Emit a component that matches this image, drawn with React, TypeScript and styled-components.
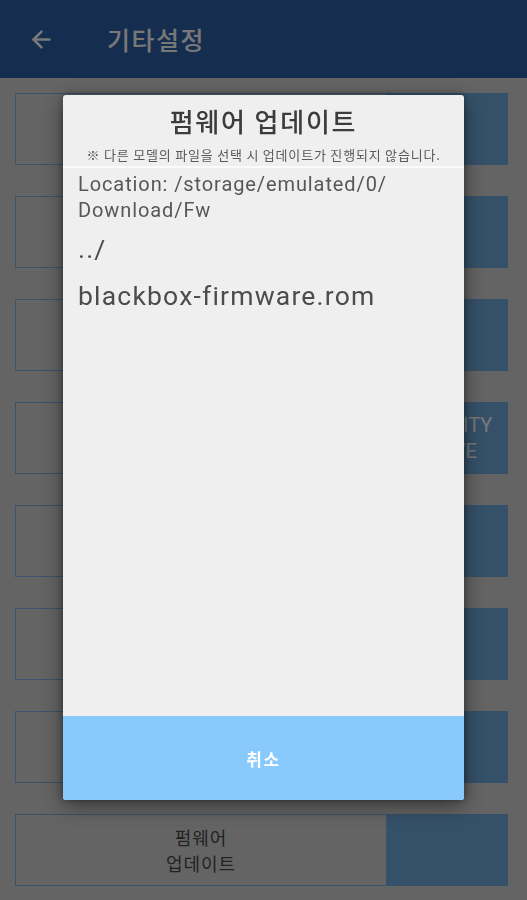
import React from "react";
import styled, { createGlobalStyle } from "styled-components";
import { ArrowLeft } from "lucide-react";

const GlobalStyle = createGlobalStyle`
  html, body { margin: 0; padding: 0; }
  body {
    width: 527px;
    height: 900px;
    overflow: hidden;
    background: #c9c9c9;
    font-family: Roboto, "Noto Sans CJK KR", "Noto Sans", sans-serif;
  }
`;

const Page = styled.div`
  width: 527px;
  height: 900px;
  background: #c9c9c9;
  display: flex;
  flex-direction: column;
`;

const AppBar = styled.header`
  height: 78px;
  flex: 0 0 78px;
  background: #2a5a9f;
  display: flex;
  align-items: center;
  padding-left: 28px;
  gap: 52px;
  color: #f4f4f4;
  box-sizing: border-box;
`;

const AppBarTitle = styled.h1`
  margin: 0;
  font-family: "Noto Sans CJK KR", Roboto, sans-serif;
  font-size: 25px;
  font-weight: 500;
  color: #f0f0f0;
  letter-spacing: 1.5px;
`;

const List = styled.div`
  display: flex;
  flex-direction: column;
  gap: 31px;
  padding: 15px 19px 0 15px;
`;

const Row = styled.div`
  height: 72px;
  display: flex;
`;

const LabelBox = styled.div`
  flex: 0 0 372px;
  box-sizing: border-box;
  border: 1.5px solid #76a6d6;
  display: flex;
  align-items: center;
  justify-content: center;
  text-align: center;
  font-family: "Noto Sans CJK KR", Roboto, sans-serif;
  font-size: 18px;
  line-height: 26px;
  letter-spacing: 1px;
  color: #444;
`;

const ValueBox = styled.div`
  flex: 1;
  background: #6aa3d2;
  display: flex;
  align-items: center;
  justify-content: center;
  text-align: center;
  font-size: 20px;
  line-height: 26px;
  color: #f2f2f2;
  padding-left: 4px;
`;

const Overlay = styled.div`
  position: fixed;
  inset: 0;
  background: rgba(0, 0, 0, 0.5);
  display: flex;
  justify-content: center;
  align-items: flex-start;
  padding-top: 95px;
`;

const Dialog = styled.div`
  width: 401px;
  height: 705px;
  background: #efefef;
  border-radius: 3px;
  overflow: hidden;
  display: flex;
  flex-direction: column;
  box-shadow: 0 6px 22px rgba(0, 0, 0, 0.45), 0 0 7px rgba(0, 0, 0, 0.35);
`;

const DialogHeader = styled.div`
  display: flex;
  flex-direction: column;
  align-items: center;
  padding: 11px 0 3px;
  border-bottom: 2px solid #fbfbfb;
  font-family: "Noto Sans CJK KR", Roboto, sans-serif;
`;

const DialogTitle = styled.h2`
  margin: 0;
  font-size: 26px;
  line-height: 30px;
  font-weight: 500;
  letter-spacing: 1.8px;
  color: #3c3c3c;
`;

const DialogNote = styled.p`
  margin: 11px 0 0;
  font-size: 13px;
  line-height: 16px;
  letter-spacing: 0.8px;
  color: #5a5a5a;
  white-space: nowrap;
`;

const DialogBody = styled.div`
  flex: 1;
  padding: 3px 15px 0;
  color: #555;
`;

const Location = styled.div`
  font-size: 20px;
  line-height: 26px;
  letter-spacing: 0.9px;
  color: #575757;
  margin-bottom: 2px;
`;

const FileItem = styled.div`
  height: 47px;
  display: flex;
  align-items: center;
  font-size: 26.5px;
  letter-spacing: 1.2px;
  color: #4c4c4c;
`;

const CancelButton = styled.button`
  flex: 0 0 84px;
  border: none;
  background: #89cafd;
  color: #ffffff;
  font-family: "Noto Sans CJK KR", Roboto, sans-serif;
  font-size: 17px;
  font-weight: 700;
  letter-spacing: 1.5px;
  cursor: pointer;
`;

const rows: { label?: string; value?: string }[] = [
  {},
  {},
  {},
  { value: "PRIORITY\nDRIVE" },
  {},
  {},
  {},
  { label: "펌웨어\n업데이트" },
];

const Multiline: React.FC<{ text: string }> = ({ text }) => (
  <span>
    {text.split("\n").map((t, i) => (
      <React.Fragment key={i}>
        {i > 0 && <br />}
        {t}
      </React.Fragment>
    ))}
  </span>
);

export default function App() {
  return (
    <>
      <GlobalStyle />
      <Page>
        <AppBar>
          <ArrowLeft size={27} strokeWidth={2.2} />
          <AppBarTitle>기타설정</AppBarTitle>
        </AppBar>
        <List>
          {rows.map((r, i) => (
            <Row key={i}>
              <LabelBox>{r.label ? <Multiline text={r.label} /> : null}</LabelBox>
              <ValueBox>{r.value ? <Multiline text={r.value} /> : null}</ValueBox>
            </Row>
          ))}
        </List>
      </Page>
      <Overlay>
        <Dialog>
          <DialogHeader>
            <DialogTitle>펌웨어 업데이트</DialogTitle>
            <DialogNote>※ 다른 모델의 파일을 선택 시 업데이트가 진행되지 않습니다.</DialogNote>
          </DialogHeader>
          <DialogBody>
            <Location>
              Location: /storage/emulated/0/
              <br />
              Download/Fw
            </Location>
            <FileItem>../</FileItem>
            <FileItem>blackbox-firmware.rom</FileItem>
          </DialogBody>
          <CancelButton>취소</CancelButton>
        </Dialog>
      </Overlay>
    </>
  );
}
